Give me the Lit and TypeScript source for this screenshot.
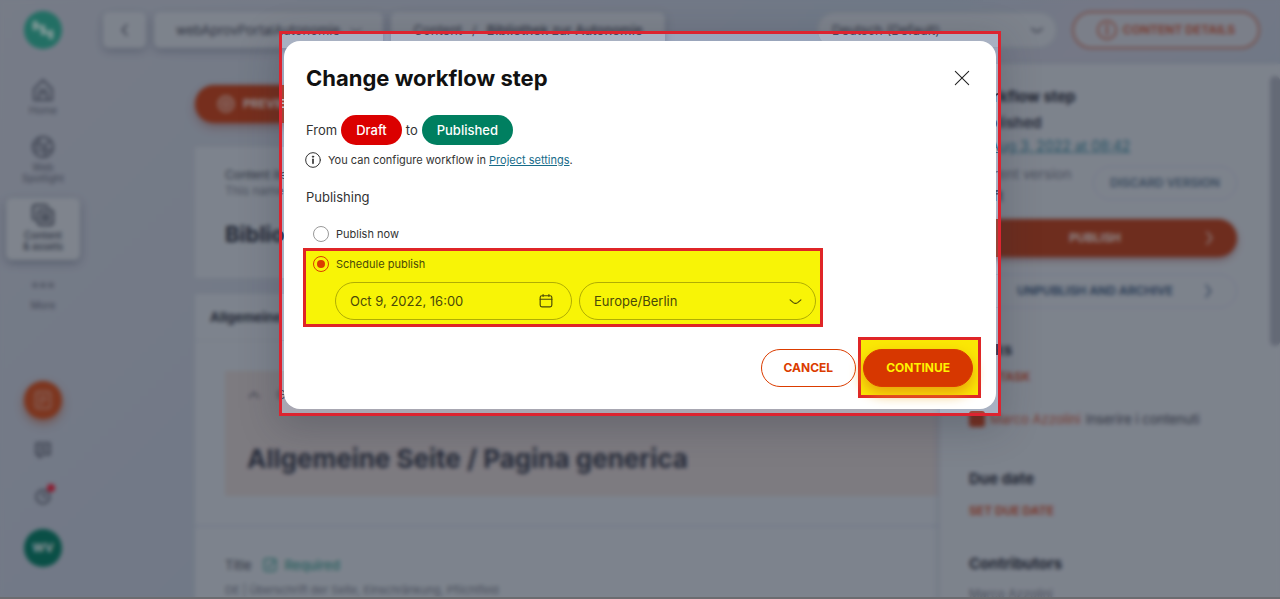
import { LitElement, html, css, svg } from "lit";
import { customElement, state } from "lit/decorators.js";

const icon = (size: number, body: unknown, width = 1.2) => html`<svg
  width=${size} height=${size} viewBox="0 0 24 24" fill="none" stroke="currentColor"
  stroke-width=${width} stroke-linecap="round" stroke-linejoin="round" aria-hidden="true">${body}</svg>`;

const shapes = {
  home: svg`<path d="M3 11 12 2l9 9v11H3z"/><path d="M8 22v-7h8v7M9 12h6"/>`,
  globe: svg`<circle cx="12" cy="12" r="10"/><path d="M2 10h12v11M8 3v7M14 10l6-4M14 15h7M5 15h9"/>`,
  assets: svg`<rect x="7" y="7" width="15" height="15" rx="3"/><path d="M4 17a3 3 0 0 1-2-3V5a3 3 0 0 1 3-3h9a3 3 0 0 1 3 2M11 12h7M11 17h7M12 11v7M17 11v7"/>`,
  more: svg`<circle cx="4" cy="12" r="2"/><circle cx="12" cy="12" r="2"/><circle cx="20" cy="12" r="2"/>`,
  chat: svg`<path d="M3 3h18v15h-9l-5 4v-4H3z"/><path d="M7 8h10M7 13h10"/>`,
  help: svg`<rect x="4" y="3" width="16" height="18" rx="3"/><path d="M8 8h8M8 12h8M8 16h4"/>`,
  bell: svg`<circle cx="12" cy="13" r="9"/><path d="M12 8v5h4"/>`,
  left: svg`<path d="m15 4-7 8 7 8"/>`,
  right: svg`<path d="m9 3 7 9-7 9"/>`,
  up: svg`<path d="m4 16 8-8 8 8"/>`,
  down: svg`<path d="m2 9 6 5q4 3 8 0l6-5"/>`,
  info: svg`<circle cx="12" cy="12" r="11"/><path d="M12 11v6" stroke-width="2.500"/><circle cx="12" cy="7" r="1" fill="currentColor"/>`,
  eye: svg`<circle cx="12" cy="12" r="10"/><circle cx="12" cy="12" r="4"/>`,
  check: svg`<rect x="3" y="3" width="18" height="18" rx="4"/><path d="m8 12 3 3 9-10"/>`,
  close: svg`<path d="m2 2 20 20M22 2 2 22"/>`,
  calendar: svg`<rect x="2" y="3" width="20" height="19" rx="3"/><path d="M2 9h20M7 1v3M17 1v3"/>`,
};

const base = css`
  :host { display: block; font-family: Inter, "Liberation Sans", sans-serif; }
  * { box-sizing: border-box; }
  svg { display: block; flex: none; }
  button, input, select { font: inherit; color: inherit; margin: 0; }
  button { cursor: pointer; }
  h1, h2, h3, p { margin: 0; }
`;

@customElement("content-editor")
export class ContentEditor extends LitElement {
  static styles = [base, css`
    :host { height: 100%; color: #454c60; font-size: 12px; line-height: 16px; }
    .shell {
      display: grid; grid-template-columns: 86px minmax(0, 1fr); height: 100%;
      background: linear-gradient(135deg, #b0b7c8 0%, #a9b3c7 35%, #a5b3c7 50%, #adb2c6 60%, #a4b2c6 75%);
    }
    .rail { display: flex; flex-direction: column; align-items: center; padding-top: 11px; }
    .round { width: 38px; height: 38px; border-radius: 50%; border: 0; padding: 0; display: grid; place-items: center; color: #d5dde5; font-weight: 700; }
    .logo { background: #33a494; }
    .nav {
      display: flex; flex-direction: column; align-items: center; gap: 3px; width: 74px; padding: 5px 0;
      color: #5f677b; text-decoration: none; text-align: center; font-size: 10px; line-height: 11px;
    }
    .home { margin-top: 24px; }
    .spot { margin-top: 9px; }
    .active { background: #bbc3d0; border-radius: 6px; margin-top: 9px; height: 62px; color: #485065; box-shadow: 0 3px 8px #7d879e; font-weight: 500; }
    .overflow { margin-top: 8px; }
    .create { background: #b8502f; margin-top: 65px; box-shadow: 0 4px 10px #a8766f; color: #c58d80; }
    .tool { border: 0; background: none; padding: 0; margin-top: 22px; position: relative; }
    .tool + .tool { margin-top: 28px; }
    .dot { position: absolute; width: 8px; height: 8px; border-radius: 50%; background: #cf2745; right: -3px; top: -3px; }
    .user { background: #0f7568; margin-top: 24px; }
    .main { display: grid; grid-template-rows: 64px minmax(0, 1fr); min-width: 0; }
    .bar { display: flex; align-items: center; padding: 0 20px 4px 17px; gap: 8px; }
    .tile { height: 36px; border: 0; background: #b9c1cf; border-radius: 6px; display: flex; align-items: center; justify-content: center; gap: 10px; font-size: 13px; box-shadow: 0 3px 8px #858fa5; white-space: nowrap; }
    .back { width: 43px; padding: 0; }
    .project { width: 229px; padding: 0 22px; justify-content: space-between; }
    .crumbs { width: 274px; }
    .crumbs b { font-weight: 500; }
    .lang { margin-left: auto; width: 240px; display: grid; align-items: center; }
    .lang select { appearance: none; grid-area: 1 / 1; height: 36px; border: 1px solid #a6afbf; border-radius: 18px; background: #b9c1cf; padding: 0 14px; font-size: 13px; }
    .lang svg { grid-area: 1 / 1; justify-self: end; margin-right: 14px; pointer-events: none; }
    .details { margin-left: 7px; width: 188px; height: 38px; border-radius: 19px; border: 2px solid #b0756e; background: #b5bccb; color: #b25d4e; font-weight: 700; display: flex; align-items: center; justify-content: center; gap: 6px; }
    .work { display: grid; grid-template-columns: minmax(0, 1fr) 340px; min-height: 0; }
    .content { padding: 21px 0 0 109px; overflow: hidden; }
    .preview { display: flex; align-items: center; gap: 8px; width: 150px; height: 38px; border: 0; border-radius: 19px; background: #ae452b; color: #d8d1d5; font-weight: 700; padding: 0 22px; box-shadow: 0 4px 10px #a0838b; }
    .card { background: #b9c2d0; }
    .name { height: 131px; margin-top: 24px; padding: 20px 30px; }
    .name h2 { font-size: 22px; line-height: 28px; margin-top: 21px; color: #30374a; }
    .muted { color: #6b7386; }
    .group { margin-top: 16px; height: 231px; }
    .group h3 { font-size: 13px; line-height: 46px; padding-left: 15px; border-bottom: 1px solid #acb5c9; color: #343b4f; }
    .guide { background: #b9b5bd; margin: 30px 0 0 30px; height: 125px; padding: 16px 22px; }
    .guide h2 { font-size: 26px; line-height: 36px; margin-top: 38px; color: #3b4358; white-space: nowrap; }
    .line { display: flex; align-items: center; gap: 16px; }
    .field { border-top: 2px solid #aab4c9; padding: 30px; }
    .field .muted { font-size: 11px; }
    .label { display: flex; align-items: center; gap: 10px; font-size: 13px; margin-bottom: 9px; }
    .required { color: #3b8e8c; display: flex; align-items: center; gap: 7px; font-weight: 500; }
    .side { background: #b9c1cf; padding: 25px 43px 0 29px; position: relative; overflow: hidden; box-shadow: -2px 0 6px #a5aec2; }
    .side h2 { font-size: 15px; line-height: 16px; color: #30374a; }
    .side a { color: #397c95; }
    .state { margin-top: 10px; font-size: 15px; }
    .date { margin-top: 7px; font-size: 14px; }
    .version { display: grid; grid-template-columns: minmax(0, 1fr) 144px; margin-top: 12px; font-size: 14px; }
    .version b { display: block; margin-top: 6px; }
    .version span { white-space: nowrap; }
    .pill { height: 34px; border-radius: 19px; border: 1px solid #a9b3c7; background: none; color: #536d8a; font-weight: 600; padding: 0; font-size: 12px; }
    .wide { display: grid; grid-template-columns: 1fr 16px; align-items: center; width: 100%; padding: 0 20px; font-size: 12px; font-weight: 700; margin-top: 17px; color: #456083; }
    .publish { height: 38px; margin-top: 15px; border: 0; background: #a3432d; color: #d2c8cb; box-shadow: 0 3px 7px #9e808b; }
    .tasks { padding-top: 34px; }
    .link { border: 0; padding: 0; background: none; color: #b25646; font-weight: 700; display: block; margin-top: 11px; font-size: 12px; }
    .task { display: flex; gap: 5px; margin-top: 26px; white-space: nowrap; font-size: 13px; }
    .task i { font-style: normal; color: #b25646; }
    .mark { width: 16px; height: 16px; border-radius: 3px; background: #ae452e; }
    .due { padding-top: 44px; }
    .due .link { margin-top: 16px; }
    .people { padding-top: 37px; }
    .people p { margin-top: 15px; font-size: 12px; line-height: 14px; }
    .thumb { position: absolute; right: 0; top: 12px; width: 10px; height: 270px; background: #949caf; border-radius: 5px; }
  `];

  render() {
    return html`<div class="shell">
      <nav class="rail">
        <div class="round logo"><svg width="26" height="26" viewBox="0 0 26 26"><g stroke="#b7dedb" stroke-width="5" stroke-linecap="round"><path d="M5 6v5M13 10v6M21 15v5"/><path d="m5 6 16 13" stroke-width="3"/></g></svg></div>
        <a class="nav home" href="#home">${icon(24, shapes.home, 2)}Home</a>
        <a class="nav spot" href="#spotlight">${icon(24, shapes.globe, 2)}<span>Web<br>Spotlight</span></a>
        <a class="nav active" href="#content">${icon(24, shapes.assets, 2)}<span>Content<br>&amp; assets</span></a>
        <a class="nav overflow" href="#more">${icon(24, shapes.more, 1.2)}More</a>
        <button class="round create" aria-label="Create">${icon(22, shapes.help, 2)}</button>
        <button class="tool" aria-label="Messages">${icon(18, shapes.chat, 2)}</button>
        <button class="tool" aria-label="Notifications">${icon(18, shapes.bell, 2)}<span class="dot"></span></button>
        <button class="round user">WV</button>
      </nav>
      <div class="main">
        <header class="bar">
          <button class="tile back" aria-label="Back">${icon(16, shapes.left, 2)}</button>
          <button class="tile project">webAprovPortalAutonomie ${icon(12, shapes.down, 2)}</button>
          <div class="tile crumbs"><span>Content</span><span>/</span><b>Bibliothek zur Autonomie</b></div>
          <label class="lang"><select aria-label="Language"><option>Deutsch (Default)</option></select>${icon(12, shapes.down, 3)}</label>
          <button class="details">${icon(20, shapes.info, 2)}CONTENT DETAILS</button>
        </header>
        <div class="work">
          <main class="content">
            <button class="preview">${icon(18, shapes.eye, 2)}PREVIEW</button>
            <section class="card name"><p>Content item name</p><p class="muted">This name is</p><h2>Bibliothek</h2></section>
            <section class="card group">
              <h3>Allgemeine Seite</h3>
              <div class="guide"><div class="line">${icon(14, shapes.up, 2)}<span>Guidelines</span></div><h2>Allgemeine Seite / Pagina generica</h2></div>
            </section>
            <section class="card field">
              <div class="label"><span>Title</span><span class="required">${icon(16, shapes.check, 2)}Required</span></div>
              <p class="muted">DE | Überschrift der Seite, Einschränkung, Pflichtfeld</p>
            </section>
          </main>
          <aside class="side">
            <h2>Workflow step</h2>
            <p class="state"><b>Published</b></p>
            <p class="date">on <a href="#date">Aug 3, 2022 at 08:42</a></p>
            <div class="version"><div><span class="muted">Current version</span><b>Draft</b></div><button class="pill">DISCARD VERSION</button></div>
            <button class="pill wide publish"><span>PUBLISH</span>${icon(16, shapes.right, 2)}</button>
            <button class="pill wide"><span>UNPUBLISH AND ARCHIVE</span>${icon(16, shapes.right, 2)}</button>
            <section class="tasks"><h2>Tasks</h2><button class="link">ADD TASK</button><div class="task"><span class="mark"></span><i>Marco Azzolini</i><span>Inserire i contenuti</span></div></section>
            <section class="due"><h2>Due date</h2><button class="link">SET DUE DATE</button></section>
            <section class="people"><h2>Contributors</h2><p class="muted">Marco Azzolini</p></section>
            <span class="thumb"></span>
          </aside>
        </div>
      </div>
    </div>`;
  }
}

@customElement("workflow-dialog")
export class WorkflowDialog extends LitElement {
  @state() private mode = "schedule";

  static styles = [base, css`
    .dialog { background: #fff; border-radius: 16px; padding: 22px 15px 11px 19px; color: #333; font-size: 13px; line-height: 20px; }
    .head { display: flex; align-items: center; justify-content: space-between; height: 30px; padding: 0 10px 0 3px; }
    h1 { font-size: 22px; line-height: 30px; font-weight: 700; color: #111; }
    .close { border: 0; background: none; padding: 1px; color: #222; }
    .steps { display: flex; align-items: center; gap: 4px; margin-top: 22px; padding-left: 3px; }
    .badge { height: 30px; line-height: 30px; border-radius: 15px; padding: 0 15px; color: #fff; font-weight: 500; }
    .draft { background: #db0000; }
    .published { background: #007f60; }
    .note { display: flex; align-items: center; gap: 7px; margin-top: 5px; padding-left: 2px; font-size: 11px; }
    .note a { color: #176c8a; }
    h2 { font-size: 13px; line-height: 20px; font-weight: 400; margin: 17px 0 0 3px; }
    .choice { display: flex; align-items: center; gap: 7px; font-size: 11px; line-height: 20px; padding-left: 10px; }
    .choice input { appearance: none; width: 16px; height: 16px; border: 1px solid #999; border-radius: 50%; display: grid; place-items: center; }
    .choice input:checked { border-color: #db3c00; }
    .choice input:checked::before { content: ""; width: 8px; height: 8px; border-radius: 50%; background: #db3c00; }
    .now { margin: 17px 0 4px; }
    .schedule { max-width: 520px; border: 3px solid #df2527; background: #f8f406; padding: 3px 4px 4px 7px; color: #4a4908; }
    .schedule .choice { padding: 0; }
    .fields { display: grid; grid-template-columns: 1fr 1fr; gap: 7px; margin: 8px 0 0 22px; }
    .field { display: grid; align-items: center; }
    .field input, .field select { appearance: none; grid-area: 1 / 1; width: 100%; height: 38px; border: 1px solid #b0ad04; border-radius: 19px; background: transparent; padding: 0 14px; outline: 0; font-size: 13px; }
    .field svg { grid-area: 1 / 1; justify-self: end; margin-right: 14px; pointer-events: none; }
    .field input + svg { margin-right: 19px; }
    .actions { display: flex; align-items: center; justify-content: flex-end; gap: 2px; margin-top: 10px; }
    .btn { height: 38px; border-radius: 19px; border: 1px solid #db3c00; background: #fff; color: #db3c00; padding: 0 22px; font-size: 12px; font-weight: 700; }
    .mark { border: 3px solid #df2527; background: #fae805; padding: 9px 5px 8px 2px; }
    .go { background: #d73700; color: #fff200; display: block; box-shadow: 0 6px 14px #e8a00c; }
  `];

  private pick(mode: string) { this.mode = mode; }

  render() {
    return html`<section class="dialog" role="dialog" aria-labelledby="title">
      <header class="head"><h1 id="title">Change workflow step</h1><button class="close" aria-label="Close">${icon(16, shapes.close, 1.6)}</button></header>
      <div class="steps"><span>From</span><span class="badge draft">Draft</span><span>to</span><span class="badge published">Published</span></div>
      <div class="note">${icon(16, shapes.info, 1.5)}<p>You can configure workflow in <a href="#settings">Project settings</a>.</p></div>
      <h2>Publishing</h2>
      <label class="choice now"><input type="radio" name="mode" .checked=${this.mode === "now"} @change=${() => this.pick("now")}>Publish now</label>
      <div class="schedule">
        <label class="choice"><input type="radio" name="mode" .checked=${this.mode === "schedule"} @change=${() => this.pick("schedule")}>Schedule publish</label>
        <div class="fields">
          <label class="field"><input type="text" aria-label="Date and time" value="Oct 9, 2022, 16:00">${icon(14, shapes.calendar, 2)}</label>
          <label class="field"><select aria-label="Time zone"><option>Europe/Berlin</option></select>${icon(13, shapes.down, 2)}</label>
        </div>
      </div>
      <footer class="actions"><button class="btn">CANCEL</button><div class="mark"><button class="btn go">CONTINUE</button></div></footer>
    </section>`;
  }
}

@customElement("app-root")
export class AppRoot extends LitElement {
  static styles = [base, css`
    :host { position: relative; height: 100vh; overflow: hidden; }
    .scrim {
      position: absolute; inset: 0; background: rgba(0, 0, 0, 0.32); backdrop-filter: blur(2px); border-bottom: 2px solid #6b6c70;
      clip-path: polygon(evenodd, 0 0, 100% 0, 100% 100%, 0 100%, 0 0,
        calc(50% - 361px) 31px, calc(50% + 361px) 31px, calc(50% + 361px) 416px, calc(50% - 361px) 416px, calc(50% - 361px) 31px);
    }
    .layer { position: absolute; inset: 0; display: flex; align-items: flex-start; justify-content: center; padding-top: 31px; }
    .frame { flex: 0 1 722px; border: 3px solid #dc2430; padding: 7px 2px 4px; background: rgba(75, 85, 120, 0.15); box-shadow: 0 10px 36px rgba(35, 38, 55, 0.26); }
  `];

  render() {
    return html`<content-editor></content-editor>
      <div class="scrim"></div>
      <div class="layer"><div class="frame"><workflow-dialog></workflow-dialog></div></div>`;
  }
}
